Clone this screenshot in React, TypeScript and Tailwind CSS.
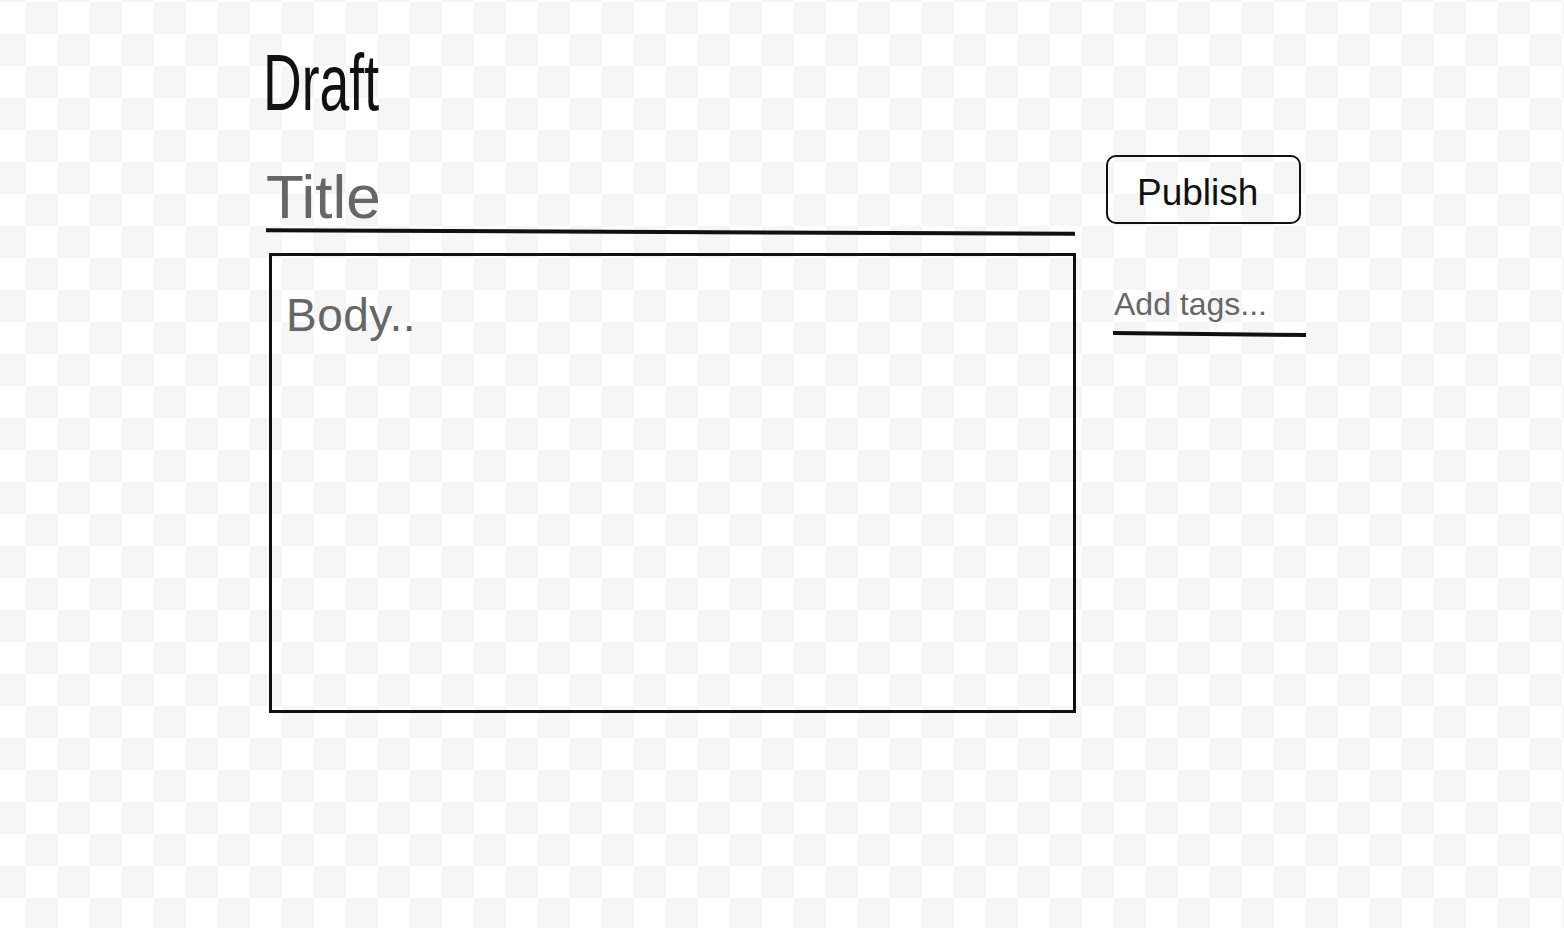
import { useState } from 'react';

// Draft editor: title, body, publish + tags on the right
export default function App() {
  const [title, setTitle] = useState('');
  const [body, setBody] = useState('');
  const [tags, setTags] = useState('');

  return (
    <div className="h-[928px] w-full overflow-hidden bg-[image:conic-gradient(#fff_25%,#f6f6f6_0_50%,#fff_0_75%,#f6f6f6_0)] bg-[length:64px_64px] bg-[position:26px_2px] font-['Liberation_Sans',Arial,sans-serif]">
      <div className="pl-[266px] pt-[43px]">
        <h1 className="ml-[-3px] h-[80px] origin-left scale-x-[0.67] text-[80px] leading-none text-[#111]">
          Draft
        </h1>

        <div className="mt-[32px] flex items-start gap-[30px]">
          {/* main column */}
          <div className="flex w-[810px] flex-col">
            <input
              type="text"
              value={title}
              onChange={(e) => setTitle(e.target.value)}
              placeholder="Title"
              className="mt-[10px] h-[62px] w-full bg-transparent text-[62px] leading-none text-[#111] outline-none placeholder:text-[#666]"
            />
            <div className="mt-[3px] h-[4px] w-[809px] rotate-[0.25deg] bg-[#111]" />
            <textarea
              value={body}
              onChange={(e) => setBody(e.target.value)}
              placeholder="Body.."
              className="ml-[3px] mt-[19px] h-[460px] w-[807px] resize-none border-[3px] border-[#111] bg-transparent pl-[14px] pr-4 pt-[36px] text-[46px] leading-none tracking-[0.5px] text-[#111] outline-none placeholder:text-[#666]"
            />
          </div>

          {/* side column */}
          <div className="flex w-[200px] flex-col">
            <button
              type="button"
              className="flex h-[69px] w-[195px] items-center rounded-[10px] border-2 border-[#111] pl-[29px] pt-[5px] text-[37px] leading-none text-[#111]"
            >
              Publish
            </button>
            <input
              type="text"
              value={tags}
              onChange={(e) => setTags(e.target.value)}
              placeholder="Add tags..."
              className="ml-[8px] mt-[60px] h-[40px] w-[192px] bg-transparent p-0 text-[32px] text-[#111] outline-none placeholder:text-[#666]"
            />
            <div className="ml-[7px] mt-[8px] h-[4px] w-[193px] rotate-[0.6deg] bg-[#111]" />
          </div>
        </div>
      </div>
    </div>
  );
}
